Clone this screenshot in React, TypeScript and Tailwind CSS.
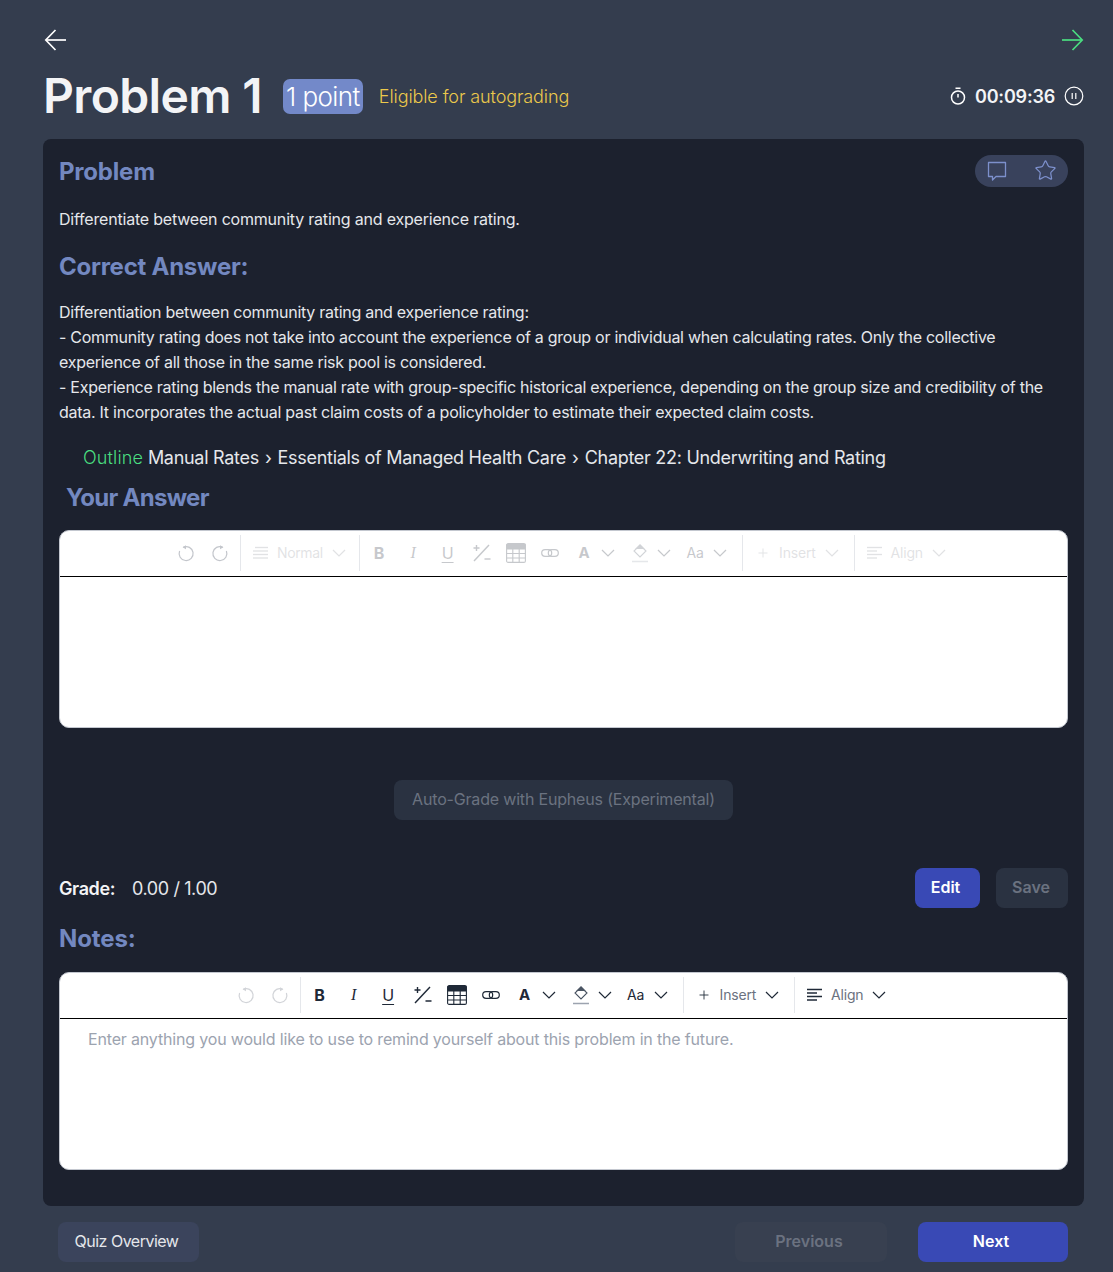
import { Plus, Star } from "lucide-react"

const font = { fontFamily: "Inter, 'Noto Sans', sans-serif" }

function BigArrow({ right = false }: { right?: boolean }) {
  return (
    <svg width="24" height="24" viewBox="0 0 24 24" fill="none" stroke="currentColor" strokeWidth="1.7" className={right ? "-scale-x-100" : ""}>
      <path d="M22 12H2" />
      <path d="M11.5 2 1.8 12l9.7 10" />
    </svg>
  )
}

function ChatIcon() {
  return (
    <svg width="20" height="21" viewBox="0 0 20 21" fill="none" stroke="currentColor" strokeWidth="1.3">
      <path d="M1.5 1.5h17v14h-9.5l-3.5 3.5v-3.5h-4z" strokeLinejoin="round" />
    </svg>
  )
}

function UndoIcon({ flip = false }: { flip?: boolean }) {
  return (
    <svg width="18" height="18" viewBox="0 0 18 18" fill="none" stroke="currentColor" strokeWidth="1.2" className={flip ? "-scale-x-100" : ""}>
      <path d="M6.2 3.2A7 7 0 1 1 2.6 7" />
      <path d="M9 1.2 5.6 3.2 9 5.2" fill="currentColor" stroke="none" />
    </svg>
  )
}

function LinesIcon({ align = false }: { align?: boolean }) {
  return (
    <svg width="16" height="14" viewBox="0 0 16 14" stroke="currentColor" strokeWidth="1.3">
      <path d={align ? "M0 1.5h15" : "M2 1.5h13"} />
      <path d={align ? "M0 5h10" : "M0 5h15"} />
      <path d="M0 8.5h15" />
      <path d={align ? "M0 12h10" : "M0 12h15"} />
    </svg>
  )
}

function PlusMinusIcon() {
  return (
    <svg width="20" height="20" viewBox="0 0 20 20" fill="none" stroke="currentColor" strokeWidth="1.4">
      <path d="M2 18 17 2" />
      <path d="M1.5 5h6M4.5 2v6" />
      <path d="M12.5 16h6" />
    </svg>
  )
}

function TableIcon() {
  return (
    <svg width="20" height="20" viewBox="0 0 20 20" fill="none" stroke="currentColor" strokeWidth="1.1">
      <rect x="0.6" y="0.6" width="18.8" height="18.8" rx="1.5" />
      <path d="M1 1.5h18v4.5H1z" fill="currentColor" />
      <path d="M0.6 10.5h18.8M0.6 15h18.8M6.8 6v13.4M13.2 6v13.4" />
    </svg>
  )
}

function LinkIcon() {
  return (
    <svg width="18" height="10" viewBox="0 0 18 10" fill="none" stroke="currentColor" strokeWidth="1.2">
      <rect x="0.7" y="1.6" width="10" height="6.8" rx="3.4" />
      <rect x="7.3" y="1.6" width="10" height="6.8" rx="3.4" />
    </svg>
  )
}

function FillIcon() {
  return (
    <svg width="18" height="20" viewBox="0 0 18 20" fill="none" stroke="#4b5563" strokeWidth="1.1">
      <path d="M9 2 15 8 9 14 3 8z" />
      <path d="M5.5 5.5 9 2l3.5 3.5z" fill="#4b5563" />
      <path d="M1 18.5h16" stroke="#9ca3af" strokeWidth="1.5" />
    </svg>
  )
}

function Cell({ children, w = "w-[34px]" }: { children: React.ReactNode; w?: string }) {
  return <div className={`${w} h-full flex items-center justify-center shrink-0`}>{children}</div>
}

function Chevron() {
  return (
    <svg width="14" height="8" viewBox="0 0 14 8" fill="none" stroke="currentColor" strokeWidth="1.2" className="shrink-0">
      <path d="M1 1l6 6 6-6" />
    </svg>
  )
}

function Divider({ className = "" }: { className?: string }) {
  return <div className={`w-px h-[36px] bg-[#e5e7eb] shrink-0 ${className}`} />
}

function Toolbar({ disabled = false }: { disabled?: boolean }) {
  const tone = disabled ? "opacity-25" : ""
  const faint = disabled ? "opacity-[0.13]" : ""
  const label = disabled ? "" : "text-[#6b7280]"
  return (
    <div className="h-[46px] pb-[2px] border-b border-black flex items-center justify-center text-[#1f2937]">
      <div className="flex items-center h-full">
        <div className={`flex items-center h-full text-[#6b7280] ${disabled ? "opacity-40" : "opacity-30"}`}>
          <Cell><UndoIcon /></Cell>
          <Cell><UndoIcon flip /></Cell>
        </div>
        <Divider className="ml-[3px]" />
        {disabled && (
          <>
            <div className={`flex items-center pl-[12px] pr-[13px] h-full ${faint}`}>
              <LinesIcon />
              <span className="ml-[8px] w-[45px] text-[14px] tracking-[-0.4px]">Normal</span>
              <span className="ml-[10px]"><Chevron /></span>
            </div>
            <Divider />
          </>
        )}
        <div className={`flex items-center h-full ml-[2px] ${tone}`}>
          <Cell><span className="text-[16px] font-bold">B</span></Cell>
          <Cell><span className="text-[16px] italic" style={{ fontFamily: "'Liberation Serif', serif" }}>I</span></Cell>
          <Cell w="w-[35px]"><span className="text-[16px] underline underline-offset-[3px]">U</span></Cell>
          <Cell><PlusMinusIcon /></Cell>
          <Cell><TableIcon /></Cell>
          <Cell><LinkIcon /></Cell>
          <Cell><span className="pt-[2px] text-[15px] font-bold">A</span></Cell>
          <Chevron />
          <div className="ml-[8px] flex items-center h-full">
            <Cell><FillIcon /></Cell>
            <Chevron />
          </div>
          <div className="ml-[7px] flex items-center h-full">
            <Cell><span className="text-[14px] tracking-[-0.2px]">Aa</span></Cell>
            <span className="ml-[1px]"><Chevron /></span>
          </div>
        </div>
        <Divider className="ml-[15px]" />
        <div className={`flex items-center pl-[13px] pr-[15px] h-full ${faint}`}>
          <Plus size={14} strokeWidth={1.5} />
          <span className={`ml-[9px] text-[14px] tracking-[-0.2px] ${label}`}>Insert</span>
          <span className="ml-[9px]"><Chevron /></span>
        </div>
        <Divider />
        <div className={`flex items-center pl-[12px] pr-[12px] h-full ${faint}`}>
          <LinesIcon align />
          <span className={`ml-[8px] text-[14px] tracking-[-0.2px] ${label}`}>Align</span>
          <span className="ml-[9px]"><Chevron /></span>
        </div>
      </div>
    </div>
  )
}

function Editor({ disabled = false, placeholder }: { disabled?: boolean; placeholder?: string }) {
  return (
    <div className="bg-white rounded-[10px] h-[198px] overflow-hidden border border-[#c3c7cf]">
      <Toolbar disabled={disabled} />
      {placeholder && <p className="pl-[28px] pt-[8px] text-[16px] leading-[25px] tracking-[-0.17px] text-[#9ca3af]">{placeholder}</p>}
    </div>
  )
}

function Heading({ children, className = "" }: { children: React.ReactNode; className?: string }) {
  return <h2 className={`text-[24px] leading-[32px] font-bold text-[#7388c0] ${className}`}>{children}</h2>
}

export default function App() {
  return (
    <div className="min-h-[1272px] bg-[#343d4e] text-white overflow-hidden" style={font}>
      <div className="pl-[43px] pr-[29px]">
        <div className="flex justify-between pt-[28px] pl-[1px]">
          <BigArrow />
          <span className="text-[#4ade80]"><BigArrow right /></span>
        </div>

        <div className="flex items-center h-[48px] mt-[20px]">
          <h1 className="text-[48px] leading-[48px] font-semibold tracking-[-0.65px] text-[#f3f4f6]">Problem 1</h1>
          <span className="ml-[21px] h-[35px] w-[80px] flex items-center justify-center rounded-[7px] bg-[#7389c9] text-[26px] font-light tracking-[-0.6px]">1 point</span>
          <span className="ml-[16px] text-[18px] font-light tracking-[-0.1px] text-[#ecc94b]">Eligible for autograding</span>
          <div className="ml-auto flex items-center">
            <svg width="18" height="18" viewBox="0 0 18 18" fill="none" stroke="currentColor" strokeWidth="1.5">
              <circle cx="9" cy="10.5" r="6.5" />
              <path d="M6.5 1.2h5M9 7v3.5" />
            </svg>
            <span className="ml-[8px] text-[18px] font-semibold tracking-[-0.2px] text-[#f3f4f6]">00:09:36</span>
            <svg width="20" height="20" viewBox="0 0 20 20" fill="none" stroke="currentColor" strokeWidth="1.2" className="ml-[9px]">
              <circle cx="10" cy="10" r="8.8" />
              <path d="M8.2 7v6M11.8 7v6" />
            </svg>
          </div>
        </div>

        <main className="mt-[19px] h-[1067px] rounded-[8px] bg-[#1c212e] px-[16px]">
          <div className="flex items-start justify-between pt-[16px]">
            <Heading className="mt-[1px] tracking-[-0.2px]">Problem</Heading>
            <div className="flex items-center justify-between h-[32px] w-[93px] rounded-full bg-[#39425c] pl-[12px] pr-[11px] text-[#7d90cc]">
              <ChatIcon />
              <Star size={23} strokeWidth={1.3} className="-mt-[2px]" />
            </div>
          </div>

          <p className="mt-[19px] text-[16px] leading-[25px] tracking-[-0.2px] text-[#e5e7eb]">
            Differentiate between community rating and experience rating.
          </p>

          <Heading className="mt-[19px] tracking-[-0.25px]">Correct Answer:</Heading>

          <p className="mt-[17px] text-[16px] leading-[25px] tracking-[-0.27px] text-[#e5e7eb]">
            Differentiation between community rating and experience rating:
            <br />
            - Community rating does not take into account the experience of a group or individual when calculating rates. Only the collective
            <br />
            experience of all those in the same risk pool is considered.
            <br />
            - Experience rating blends the manual rate with group-specific historical experience, depending on the group size and credibility of the
            <br />
            data. It incorporates the actual past claim costs of a policyholder to estimate their expected claim costs.
          </p>

          <div className="mt-[16px] pl-[24px] flex items-center h-[32px] text-[18px] tracking-[-0.29px] text-[#e5e7eb] whitespace-pre">
            <span className="font-light tracking-[0.15px] text-[#4ade80]">Outline</span>
            <span> Manual Rates</span>
            <span className="px-[6px]">›</span>
            <span>Essentials of Managed Health Care</span>
            <span className="px-[6px]">›</span>
            <span>Chapter 22: Underwriting and Rating</span>
          </div>

          <Heading className="mt-[9px] pl-[7px] tracking-[-0.7px]">Your Answer</Heading>

          <div className="mt-[16px]">
            <Editor disabled />
          </div>

          <div className="mt-[52px] flex justify-center">
            <button className="h-[40px] w-[339px] rounded-[8px] bg-[#2a3241] pb-[2px] text-[16px] tracking-[-0.18px] text-[#6b7280]">
              Auto-Grade with Eupheus (Experimental)
            </button>
          </div>

          <div className="mt-[48px] flex items-center justify-between">
            <div className="flex items-center pt-[1px] text-[18px] tracking-[-0.4px]">
              <span className="font-semibold text-[#f3f4f6]">Grade:</span>
              <span className="ml-[17px] text-[#e5e7eb]">0.00 / 1.00</span>
            </div>
            <div className="flex gap-[16px]">
              <button className="h-[40px] w-[65px] rounded-[8px] bg-[#3949b5] pr-[4px] pb-[2px] text-[16px] font-semibold">Edit</button>
              <button className="h-[40px] w-[72px] rounded-[8px] bg-[#2a3241] pr-[2px] pb-[2px] text-[16px] font-semibold text-[#6b7280]">Save</button>
            </div>
          </div>

          <Heading className="mt-[15px] tracking-[-0.1px]">Notes:</Heading>

          <div className="mt-[17px]">
            <Editor placeholder="Enter anything you would like to use to remind yourself about this problem in the future." />
          </div>
        </main>

        <footer className="mt-[16px] flex items-center pl-[15px] pr-[16px]">
          <button className="h-[40px] w-[141px] rounded-[8px] bg-[#3b445c] pr-[4px] pb-[2px] text-[16px] tracking-[-0.5px] text-[#e5e7eb]">Quiz Overview</button>
          <button className="ml-auto h-[40px] w-[152px] rounded-[8px] bg-[#384050] pr-[4px] pb-[2px] text-[16px] font-semibold text-[#6b7280]">Previous</button>
          <button className="ml-[31px] h-[40px] w-[150px] rounded-[8px] bg-[#3949b5] pr-[4px] pb-[2px] text-[16px] font-semibold">Next</button>
        </footer>
      </div>
    </div>
  )
}
